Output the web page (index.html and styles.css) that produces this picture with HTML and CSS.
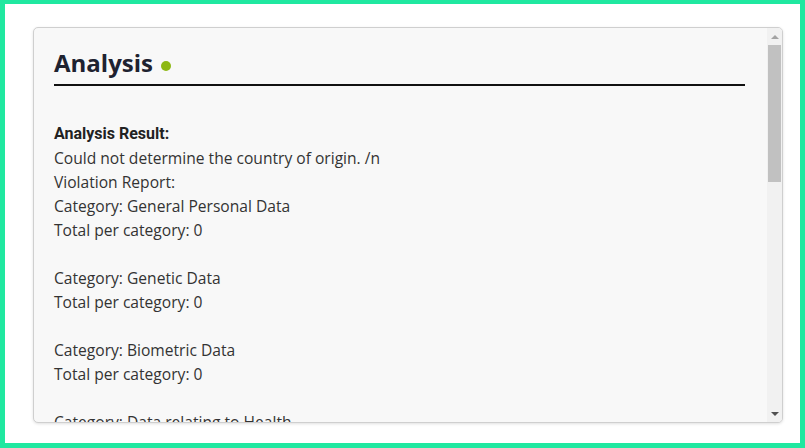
FILE: index.html
```html
<!DOCTYPE html>
<html>
<head>
<meta charset="utf-8">
<link rel="stylesheet" href="styles.css">
</head>
<body>
<div class="frame">
  <div class="card">
    <div class="scroll">
      <h2 class="title">Analysis <span class="dot"></span></h2>
      <div class="result">
        <div class="label">Analysis Result:</div>
        <div class="line">Could not determine the country of origin. /n</div>
        <div class="line">Violation Report:</div>
        <div class="line">Category: General Personal Data</div>
        <div class="line">Total per category: 0</div>
        <div class="gap"></div>
        <div class="line">Category: Genetic Data</div>
        <div class="line">Total per category: 0</div>
        <div class="gap"></div>
        <div class="line">Category: Biometric Data</div>
        <div class="line">Total per category: 0</div>
        <div class="gap"></div>
        <div class="line">Category: Data relating to Health</div>
        <div class="line">Total per category: 0</div>
      </div>
    </div>
    <div class="sbar">
      <div class="sbtn"><span class="arrow-up"></span></div>
      <div class="track"><div class="thumb"></div></div>
      <div class="sbtn"><span class="arrow-down"></span></div>
    </div>
  </div>
</div>
</body>
</html>
```
FILE: styles.css
```css
html, body {
  margin: 0;
  padding: 0;
  background: #ffffff;
}
.frame {
  box-sizing: border-box;
  width: 805px;
  height: 448px;
  border: 5px solid #20e8a0;
  border-top-width: 4px;
  padding: 23px 16px 20px 28px;
  background: #ffffff;
}
.card {
  box-sizing: border-box;
  width: 750px;
  height: 396px;
  border: 1px solid #cfcfcf;
  border-radius: 5px;
  background: #f8f8f8;
  box-shadow: 0 1px 3px rgba(0,0,0,0.12);
  overflow: hidden;
  display: flex;
}
.scroll {
  flex: 1;
  overflow: hidden;
  padding: 0 22px 0 20px;
  box-sizing: border-box;
}
.title {
  margin: 0;
  padding-top: 19px;
  padding-bottom: 5px;
  font-family: "Open Sans", "DejaVu Sans", sans-serif;
  font-weight: 700;
  font-size: 24px;
  line-height: 32px;
  color: #1e2230;
  border-bottom: 2px solid #111111;
  display: flex;
  align-items: center;
  gap: 8px;
}
.dot {
  display: inline-block;
  width: 10px;
  height: 10px;
  border-radius: 50%;
  background: #8db813;
  margin-top: 5px;
}
.result {
  padding-top: 36px;
  font-family: "Open Sans", "DejaVu Sans", sans-serif;
  font-size: 15.6px;
  line-height: 24px;
  color: #333333;
}
.label {
  font-family: Roboto, "Liberation Sans", sans-serif;
  font-weight: 700;
  font-size: 16px;
  color: #222222;
}
.gap {
  height: 24px;
}
.sbar {
  width: 15px;
  flex: none;
  background: #f1f1f1;
  display: flex;
  flex-direction: column;
}
.sbtn {
  height: 17px;
  flex: none;
  display: flex;
  align-items: center;
  justify-content: center;
}
.arrow-up {
  width: 0;
  height: 0;
  border-left: 4px solid transparent;
  border-right: 4px solid transparent;
  border-bottom: 4px solid #a3a3a3;
}
.arrow-down {
  width: 0;
  height: 0;
  border-left: 4px solid transparent;
  border-right: 4px solid transparent;
  border-top: 4px solid #505050;
}
.track {
  flex: 1;
  padding: 0 1px;
}
.thumb {
  height: 137px;
  background: #c1c1c1;
}
```
